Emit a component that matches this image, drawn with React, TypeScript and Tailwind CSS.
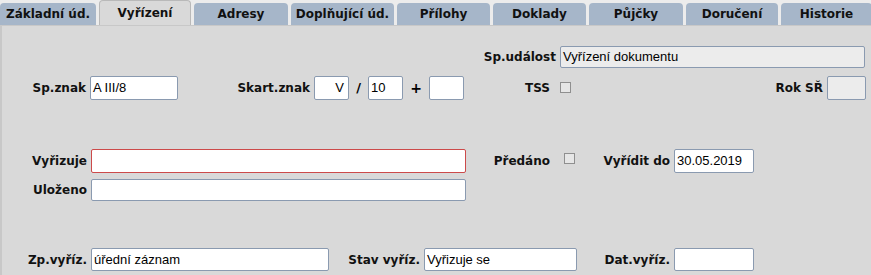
import React from "react";

const tabs = [
  "Základní úd.",
  "Vyřízení",
  "Adresy",
  "Doplňující úd.",
  "Přílohy",
  "Doklady",
  "Půjčky",
  "Doručení",
  "Historie",
];

const tabWidths = [96, 92, 94, 103, 93, 93, 94, 92, 91];

type FieldProps = {
  value?: string;
  w: string;
  h?: string;
  red?: boolean;
  gray?: boolean;
  right?: boolean;
};

function Field({ value = "", w, h = "h-[23px]", red, gray, right }: FieldProps) {
  return (
    <div
      className={[
        "flex items-center rounded-[2px] border px-[2px] text-[13px] text-black font-['Liberation_Sans',Arial,sans-serif]",
        w,
        h,
        red ? "border-[#cc4a4a]" : "border-[#8a9ab0]",
        gray ? "bg-[#ececec]" : "bg-white",
        right ? "justify-end pr-[4px]" : "",
      ].join(" ")}
    >
      {value}
    </div>
  );
}

function Label({ text, w }: { text: string; w: string }) {
  return (
    <div className={`${w} shrink-0 pr-[4px] text-right text-[12px] font-bold text-[#111]`}>
      {text}
    </div>
  );
}

function Check() {
  return <div className="h-[11px] w-[11px] border border-[#8f8f8f] bg-[#e6e6e6]" />;
}

export default function App() {
  return (
    <div className="h-[275px] w-[871px] overflow-hidden bg-[#ececec] font-['DejaVu_Sans',Verdana,sans-serif]">
      {/* Tabs */}
      <div className="flex h-[25px] items-end gap-[3px]">
        {tabs.map((t, i) =>
          i === 1 ? (
            <div
              key={t}
              className="relative z-10 flex h-[25px] shrink-0 items-center justify-center rounded-t-[4px] border border-b-0 border-[#b9b9b9] bg-[#d9d9d9] text-[12px] font-bold text-[#111]"
              style={{ width: tabWidths[i] }}
            >
              {t}
            </div>
          ) : (
            <div
              key={t}
              className="flex h-[22px] shrink-0 items-center justify-center rounded-t-[4px] bg-[#a6b6c9] text-[12px] font-bold text-[#111]"
              style={{ width: tabWidths[i] }}
            >
              {t}
            </div>
          )
        )}
      </div>

      {/* Panel */}
      <div className="h-[250px] border-l-2 border-t border-[#c8c8c8] bg-[#d9d9d9]">
        {/* Sp.událost */}
        <div className="mt-[20px] flex items-center justify-end pr-[6px]">
          <Label text="Sp.událost" w="w-[100px]" />
          <Field value="Vyřízení dokumentu" w="w-[305px]" h="h-[22px]" gray />
        </div>

        {/* Sp.znak row */}
        <div className="mt-[8px] flex items-center">
          <Label text="Sp.znak" w="w-[88px]" />
          <Field value="A III/8" w="w-[88px]" h="h-[24px]" />
          <Label text="Skart.znak" w="w-[136px]" />
          <Field value="V" w="w-[35px]" h="h-[24px]" right />
          <div className="w-[19px] text-center text-[13px] font-bold">/</div>
          <Field value="10" w="w-[35px]" h="h-[24px]" />
          <div className="w-[26px] text-center text-[14px] font-bold">+</div>
          <Field w="w-[35px]" h="h-[24px]" />
          <Label text="TSS" w="w-[90px]" />
          <div className="ml-[6px] mt-[-2px]">
            <Check />
          </div>
          <div className="flex-1" />
          <Label text="Rok SŘ" w="w-[70px]" />
          <Field w="w-[39px]" h="h-[24px]" gray />
          <div className="w-[5px]" />
        </div>

        {/* Vyřizuje row */}
        <div className="mt-[49px] flex items-center">
          <Label text="Vyřizuje" w="w-[89px]" />
          <Field w="w-[375px]" h="h-[24px]" red />
          <Label text="Předáno" w="w-[88px]" />
          <div className="ml-[10px] mt-[-6px]">
            <Check />
          </div>
          <Label text="Vyřídit do" w="w-[99px]" />
          <Field value="30.05.2019" w="w-[80px]" h="h-[24px]" />
        </div>

        {/* Uloženo */}
        <div className="mt-[6px] flex items-center">
          <Label text="Uloženo" w="w-[89px]" />
          <Field w="w-[375px]" h="h-[22px]" />
        </div>

        {/* Zp.vyříz row */}
        <div className="mt-[47px] flex items-center">
          <Label text="Zp.vyříz." w="w-[89px]" />
          <Field value="úřední záznam" w="w-[238px]" h="h-[23px]" />
          <Label text="Stav vyříz." w="w-[95px]" />
          <Field value="Vyřizuje se" w="w-[153px]" h="h-[23px]" />
          <Label text="Dat.vyříz." w="w-[97px]" />
          <Field w="w-[80px]" h="h-[23px]" />
        </div>
      </div>
    </div>
  );
}
